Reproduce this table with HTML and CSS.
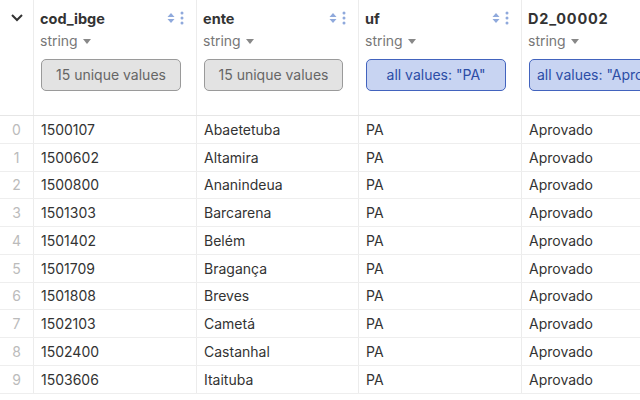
FILE: index.html
```html
<!DOCTYPE html>
<html>
<head>
<meta charset="utf-8">
<link rel="stylesheet" href="styles.css">
</head>
<body>
<div class="table">
  <div class="row head">
    <div class="cell idx hidx">
      <svg class="chev" width="14" height="10" viewBox="0 0 14 10"><path d="M2 2 L7 7 L12 2" fill="none" stroke="#333" stroke-width="2"/></svg>
    </div>
    <div class="cell hcell">
      <div class="titleline"><span class="title">cod_ibge</span>
        <span class="icons"><svg class="sort" width="8" height="12" viewBox="0 0 8 12"><path d="M4 1 L7.5 5 L0.5 5 Z M4 11 L7.5 7 L0.5 7 Z" fill="#8fa9dc"/></svg><svg class="kebab" width="4" height="14" viewBox="0 0 4 14"><circle cx="2" cy="2" r="1.5" fill="#8fa9dc"/><circle cx="2" cy="7" r="1.5" fill="#8fa9dc"/><circle cx="2" cy="12" r="1.5" fill="#8fa9dc"/></svg></span></div>
      <div class="type">string <svg class="caret" width="8" height="6" viewBox="0 0 8 6"><path d="M0 0 L8 0 L4 5 Z" fill="#888"/></svg></div>
      <div class="filter grey">15 unique values</div>
    </div>
    <div class="cell hcell">
      <div class="titleline"><span class="title">ente</span>
        <span class="icons"><svg class="sort" width="8" height="12" viewBox="0 0 8 12"><path d="M4 1 L7.5 5 L0.5 5 Z M4 11 L7.5 7 L0.5 7 Z" fill="#8fa9dc"/></svg><svg class="kebab" width="4" height="14" viewBox="0 0 4 14"><circle cx="2" cy="2" r="1.5" fill="#8fa9dc"/><circle cx="2" cy="7" r="1.5" fill="#8fa9dc"/><circle cx="2" cy="12" r="1.5" fill="#8fa9dc"/></svg></span></div>
      <div class="type">string <svg class="caret" width="8" height="6" viewBox="0 0 8 6"><path d="M0 0 L8 0 L4 5 Z" fill="#888"/></svg></div>
      <div class="filter grey">15 unique values</div>
    </div>
    <div class="cell hcell">
      <div class="titleline"><span class="title">uf</span>
        <span class="icons"><svg class="sort" width="8" height="12" viewBox="0 0 8 12"><path d="M4 1 L7.5 5 L0.5 5 Z M4 11 L7.5 7 L0.5 7 Z" fill="#8fa9dc"/></svg><svg class="kebab" width="4" height="14" viewBox="0 0 4 14"><circle cx="2" cy="2" r="1.5" fill="#8fa9dc"/><circle cx="2" cy="7" r="1.5" fill="#8fa9dc"/><circle cx="2" cy="12" r="1.5" fill="#8fa9dc"/></svg></span></div>
      <div class="type">string <svg class="caret" width="8" height="6" viewBox="0 0 8 6"><path d="M0 0 L8 0 L4 5 Z" fill="#888"/></svg></div>
      <div class="filter blue">all values: "PA"</div>
    </div>
    <div class="cell hcell">
      <div class="titleline"><span class="title wide">D2_00002</span>
        <span class="icons"><svg class="sort" width="8" height="12" viewBox="0 0 8 12"><path d="M4 1 L7.5 5 L0.5 5 Z M4 11 L7.5 7 L0.5 7 Z" fill="#8fa9dc"/></svg><svg class="kebab" width="4" height="14" viewBox="0 0 4 14"><circle cx="2" cy="2" r="1.5" fill="#8fa9dc"/><circle cx="2" cy="7" r="1.5" fill="#8fa9dc"/><circle cx="2" cy="12" r="1.5" fill="#8fa9dc"/></svg></span></div>
      <div class="type">string <svg class="caret" width="8" height="6" viewBox="0 0 8 6"><path d="M0 0 L8 0 L4 5 Z" fill="#888"/></svg></div>
      <div class="filter blue">all values: "Aprovado"</div>
    </div>
  </div>
  <div class="row"><div class="cell idx">0</div><div class="cell">1500107</div><div class="cell">Abaetetuba</div><div class="cell">PA</div><div class="cell">Aprovado</div></div>
  <div class="row"><div class="cell idx">1</div><div class="cell">1500602</div><div class="cell">Altamira</div><div class="cell">PA</div><div class="cell">Aprovado</div></div>
  <div class="row"><div class="cell idx">2</div><div class="cell">1500800</div><div class="cell">Ananindeua</div><div class="cell">PA</div><div class="cell">Aprovado</div></div>
  <div class="row"><div class="cell idx">3</div><div class="cell">1501303</div><div class="cell">Barcarena</div><div class="cell">PA</div><div class="cell">Aprovado</div></div>
  <div class="row"><div class="cell idx">4</div><div class="cell">1501402</div><div class="cell">Belém</div><div class="cell">PA</div><div class="cell">Aprovado</div></div>
  <div class="row"><div class="cell idx">5</div><div class="cell">1501709</div><div class="cell">Bragança</div><div class="cell">PA</div><div class="cell">Aprovado</div></div>
  <div class="row"><div class="cell idx">6</div><div class="cell">1501808</div><div class="cell">Breves</div><div class="cell">PA</div><div class="cell">Aprovado</div></div>
  <div class="row"><div class="cell idx">7</div><div class="cell">1502103</div><div class="cell">Cametá</div><div class="cell">PA</div><div class="cell">Aprovado</div></div>
  <div class="row"><div class="cell idx">8</div><div class="cell">1502400</div><div class="cell">Castanhal</div><div class="cell">PA</div><div class="cell">Aprovado</div></div>
  <div class="row"><div class="cell idx">9</div><div class="cell">1503606</div><div class="cell">Itaituba</div><div class="cell">PA</div><div class="cell">Aprovado</div></div>
</div>
</body>
</html>
```
FILE: styles.css
```css
html, body {
  margin: 0;
  padding: 0;
  background: #fff;
  overflow: hidden;
}
body {
  font-family: Inter, "Noto Sans", sans-serif;
  font-size: 14px;
  color: #333;
}
.table {
  width: 640px;
  height: 400px;
  overflow: hidden;
}
.row {
  display: grid;
  grid-template-columns: 34px 163px 162px 163px 118px;
  height: 27.75px;
  box-sizing: border-box;
  border-bottom: 1px solid #eeeeee;
}
.row.head {
  height: 116px;
  border-bottom: 1px solid #e6e6e6;
}
.cell {
  border-right: 1px solid #ececec;
  padding-left: 7px;
  display: flex;
  align-items: center;
  white-space: nowrap;
  overflow: hidden;
  color: #333;
}
.cell:last-child {
  border-right: none;
}
.cell.idx {
  padding-left: 0;
  justify-content: center;
  color: #bbbbbb;
}
.hidx {
  align-items: flex-start;
  padding-top: 13px;
}
.hcell {
  flex-direction: column;
  align-items: stretch;
  padding-left: 6px;
  padding-right: 15px;
  padding-top: 8px;
}
.hcell:last-child {
  padding-right: 0;
  min-width: 0;
}
.hcell:last-child .titleline,
.hcell:last-child .filter {
  width: 140px;
}
.hcell:last-child .icons {
  display: none;
}
.titleline {
  display: flex;
  align-items: center;
  justify-content: space-between;
  height: 20px;
}
.title {
  font-weight: 700;
  font-size: 14.5px;
  color: #333;
}
.title.wide {
  letter-spacing: 0.8px;
}
.icons {
  display: flex;
  align-items: center;
  gap: 5px;
  margin-right: -3px;
}
.type {
  margin-top: 3px;
  color: #777;
  height: 20px;
  line-height: 20px;
  display: flex;
  align-items: center;
  gap: 5px;
}
.caret {
  margin-top: 1px;
}
.filter {
  margin-top: 8px;
  margin-left: 1px;
  height: 32px;
  line-height: 29px;
  padding: 0 7px;
  box-sizing: border-box;
  border-radius: 5px;
  text-align: center;
  white-space: nowrap;
  overflow: hidden;
  flex-shrink: 0;
}
.filter.grey {
  background: #e3e3e3;
  border: 1px solid #9a9a9a;
  color: #666;
}
.filter.blue {
  background: #c8d4f2;
  border: 1px solid #4263be;
  color: #2c4da6;
}
```
